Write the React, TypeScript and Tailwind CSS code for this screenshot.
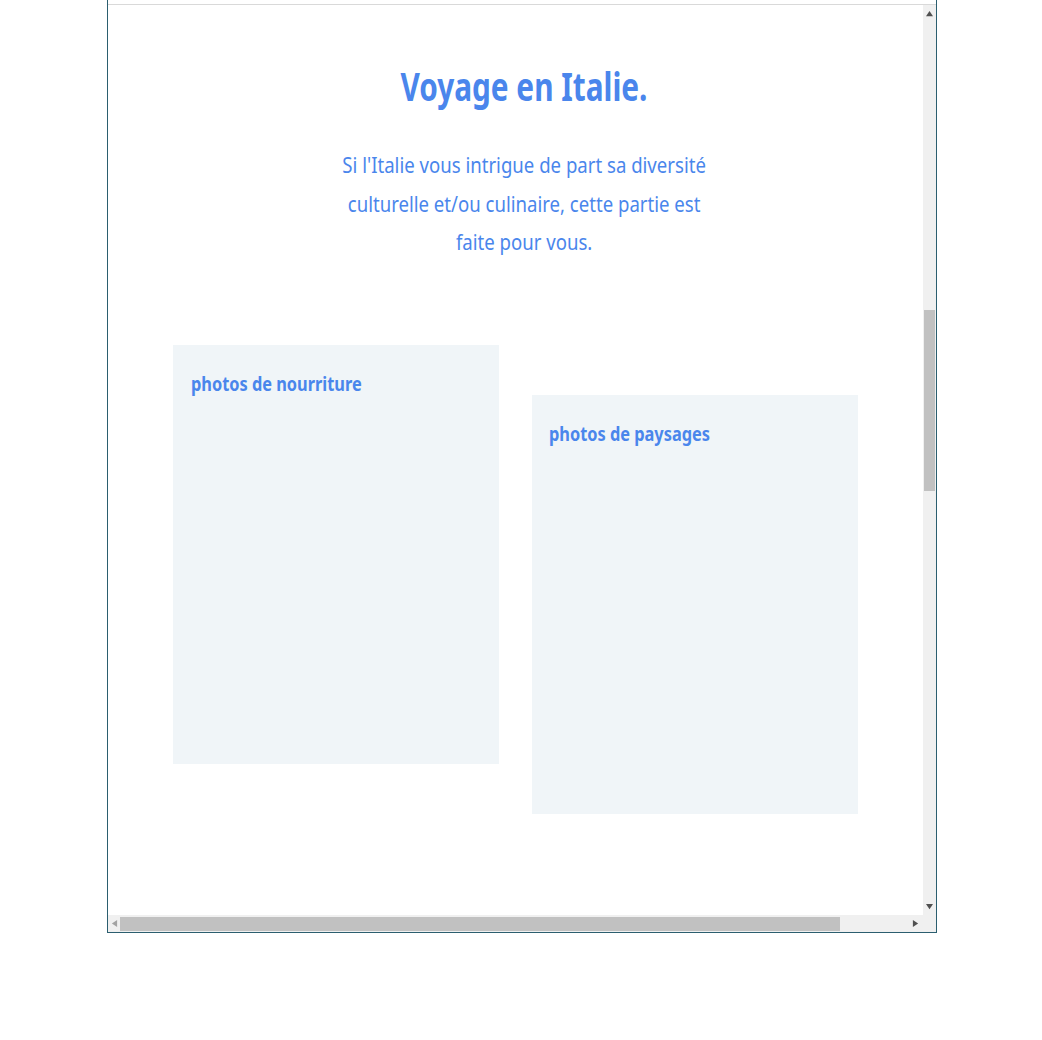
function Tri({ d, fill }: { d: string; fill: string }) {
  return (
    <svg width="7" height="7" viewBox="0 0 8 8">
      <path d={d} fill={fill} />
    </svg>
  );
}

export default function App() {
  return (
    <div className="w-[1042px] h-[1040px] bg-white">
      <div className="ml-[107px] w-[830px] h-[933px] flex flex-col border-l border-r border-b border-[#2b5e6f] pt-1">
        <div className="flex flex-1 min-h-0 border-t border-[#d9d9d9]">
          <main className="flex-1 overflow-hidden font-['Noto_Sans',sans-serif] text-[#4a86ec]">
            <h1 className="text-center text-[40px] font-bold mt-[53px] leading-[56px] pl-[17px]">
              <span className="inline-block scale-x-[0.744]">Voyage en Italie.</span>
            </h1>
            <div className="text-center text-[22px] leading-[38.5px] mt-[31px] pl-[17px]">
              <p className="inline-block scale-x-[0.845] whitespace-nowrap">
                Si l'Italie vous intrigue de part sa diversité
                <br />
                culturelle et/ou culinaire, cette partie est
                <br />
                faite pour vous.
              </p>
            </div>
            <div className="grid grid-cols-2 gap-[33px] px-[65px] mt-[84px] items-start">
              <section className="h-[419px] bg-[#f0f5f8] px-[18px] pt-[25px]">
                <h2 className="text-[20px] font-bold leading-[28px]">
                  <span className="inline-block origin-left scale-x-[0.817] whitespace-nowrap">photos de nourriture</span>
                </h2>
              </section>
              <section className="h-[419px] bg-[#f0f5f8] px-[17px] pt-[25px] mt-[50px]">
                <h2 className="text-[20px] font-bold leading-[28px]">
                  <span className="inline-block origin-left scale-x-[0.817] whitespace-nowrap">photos de paysages</span>
                </h2>
              </section>
            </div>
          </main>
          <div className="w-[13px] bg-[#f0f0f0] flex flex-col items-center">
            <div className="h-[17px] flex items-center justify-center">
              <Tri d="M4 1 L8 7 L0 7 Z" fill="#505050" />
            </div>
            <div className="h-[288px]" />
            <div className="w-[11px] h-[181px] bg-[#c1c1c1]" />
            <div className="flex-1" />
            <div className="h-[17px] flex items-center justify-center">
              <Tri d="M0 1 L8 1 L4 7 Z" fill="#505050" />
            </div>
          </div>
        </div>
        <div className="h-[17px] flex bg-[#f0f0f0]">
          <div className="w-[12px] flex items-center justify-center">
            <Tri d="M7 0 L7 8 L1 4 Z" fill="#a3a3a3" />
          </div>
          <div className="flex-1 flex items-center">
            <div className="w-[720px] h-[14px] bg-[#c1c1c1]" />
          </div>
          <div className="w-[16px] flex items-center justify-center">
            <Tri d="M1 0 L1 8 L7 4 Z" fill="#505050" />
          </div>
          <div className="w-[13px] bg-[#f0f0f0]" />
        </div>
      </div>
    </div>
  );
}
